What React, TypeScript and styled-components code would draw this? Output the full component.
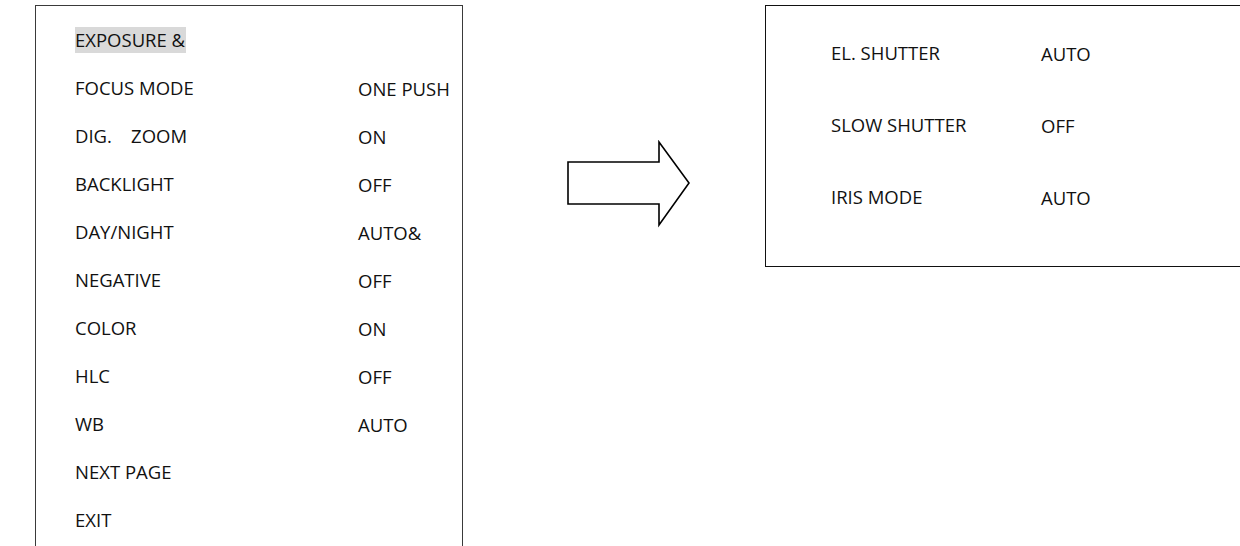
import React from 'react'
import styled, { createGlobalStyle } from 'styled-components'

const GlobalStyle = createGlobalStyle`
  html, body {
    margin: 0;
    padding: 0;
    background: #fff;
    overflow: hidden;
  }
  body {
    font-family: "Open Sans", "Liberation Sans", sans-serif;
    color: #111;
  }
`

const Page = styled.div`
  display: flex;
  align-items: flex-start;
  width: 1240px;
  height: 546px;
  overflow: hidden;
`

const MenuPanel = styled.div`
  box-sizing: border-box;
  flex: none;
  margin: 5px 0 0 35px;
  width: 428px;
  height: 600px;
  border: 1px solid #3a3a3a;
  border-bottom: none;
  padding: 10px 0 0 39px;
`

const SubPanel = styled.div`
  box-sizing: border-box;
  flex: none;
  margin-top: 5px;
  width: 520px;
  height: 262px;
  border: 1.5px solid #111;
  padding: 11px 0 0 65px;
`

const Row = styled.div<{ $h: number; $label: number }>`
  display: grid;
  grid-template-columns: ${p => p.$label}px auto;
  align-items: center;
  height: ${p => p.$h}px;
  font-size: 18.5px;
  white-space: pre;
`

const Label = styled.span<{ $active?: boolean }>`
  justify-self: start;
  line-height: 26px;
  padding-right: 1px;
  background: ${p => (p.$active ? '#d9d9d9' : 'transparent')};
`

const Arrow = styled.svg`
  flex: none;
  margin: 140px 73px 0 103px;
`

const menu: [string, string][] = [
  ['EXPOSURE &', ''],
  ['FOCUS MODE', 'ONE PUSH'],
  ['DIG.    ZOOM', 'ON'],
  ['BACKLIGHT', 'OFF'],
  ['DAY/NIGHT', 'AUTO&'],
  ['NEGATIVE', 'OFF'],
  ['COLOR', 'ON'],
  ['HLC', 'OFF'],
  ['WB', 'AUTO'],
  ['NEXT PAGE', ''],
  ['EXIT', ''],
]

const exposure: [string, string][] = [
  ['EL. SHUTTER', 'AUTO'],
  ['SLOW SHUTTER', 'OFF'],
  ['IRIS MODE', 'AUTO'],
]

function App() {
  return (
    <>
      <GlobalStyle />
      <Page>
        <MenuPanel>
          {menu.map(([label, value], i) => (
            <Row key={label} $h={48} $label={283}>
              <Label $active={i === 0}>{label}</Label>
              <span>{value}</span>
            </Row>
          ))}
        </MenuPanel>
        <Arrow width="126" height="88" viewBox="0 0 126 88">
          <polygon
            points="2,22 93,22 93,2 123,43 93,85 93,64 2,64"
            fill="#fff"
            stroke="#000"
            strokeWidth="1.6"
          />
        </Arrow>
        <SubPanel>
          {exposure.map(([label, value]) => (
            <Row key={label} $h={72} $label={210}>
              <Label>{label}</Label>
              <span>{value}</span>
            </Row>
          ))}
        </SubPanel>
      </Page>
    </>
  )
}

export default App
